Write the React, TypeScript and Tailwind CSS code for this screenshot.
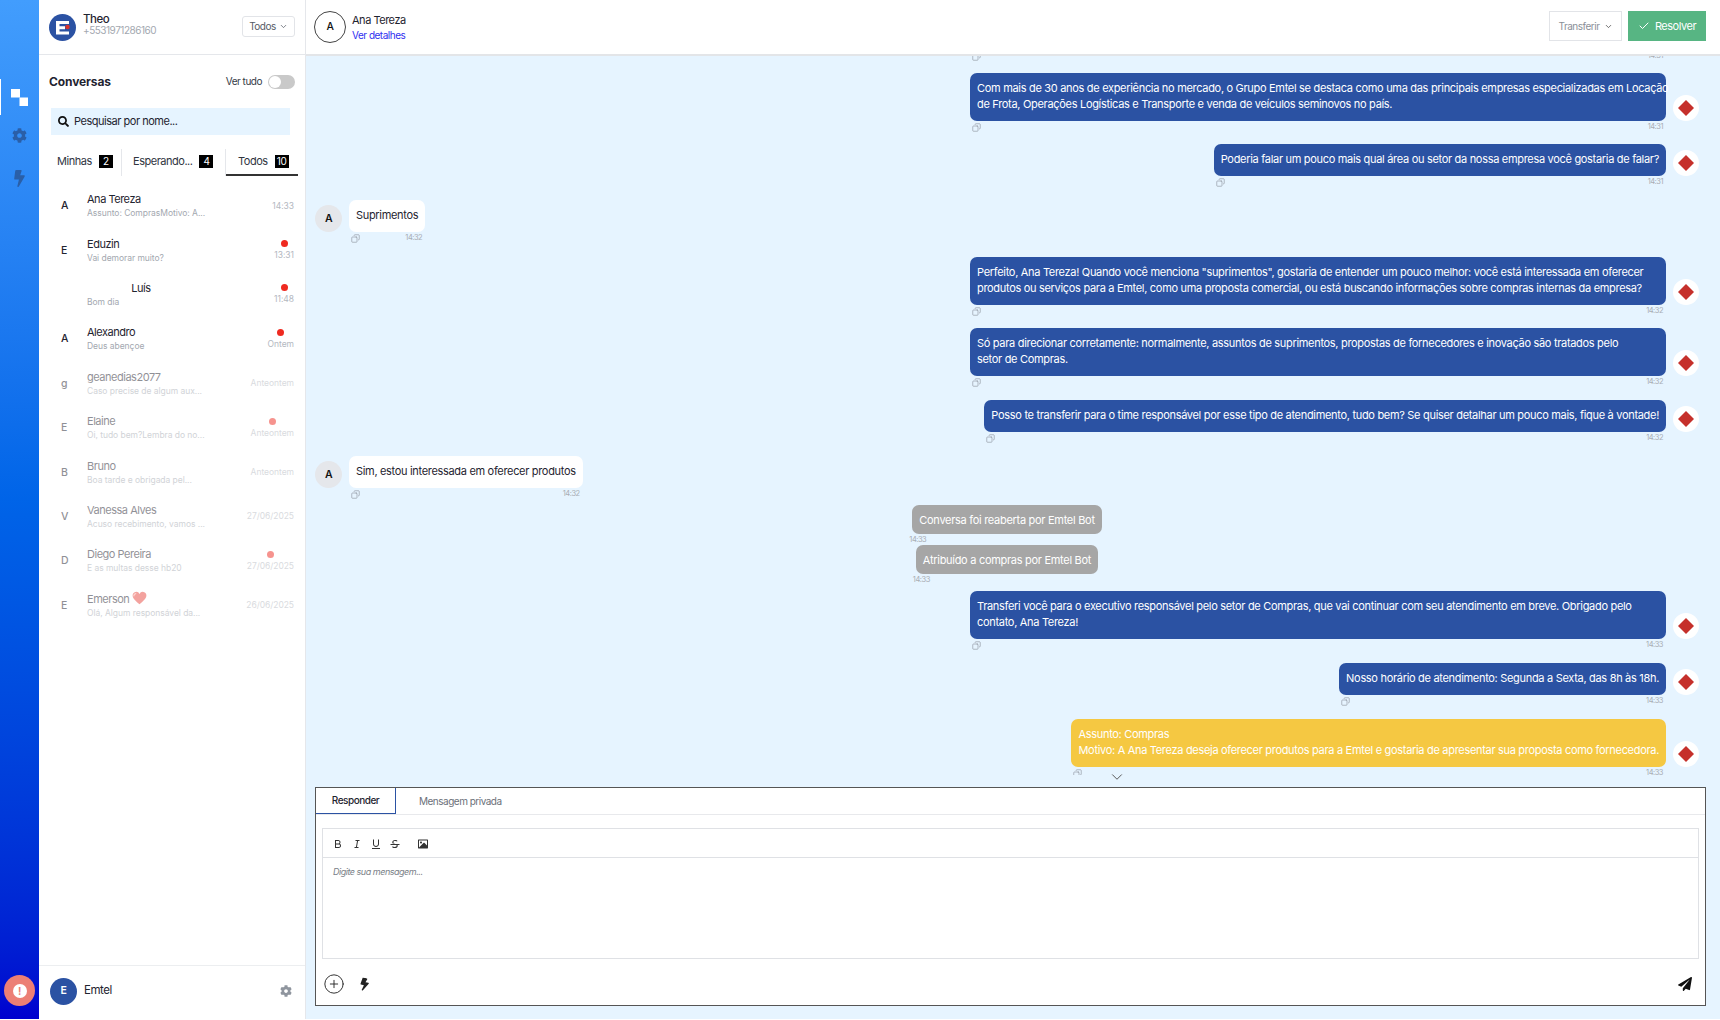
import React from "react";
import { Check, ChevronDown, CirclePlus, Copy } from "lucide-react";
import { FaCog, FaBolt, FaSearch, FaPaperPlane } from "react-icons/fa";
import { RiBold, RiItalic, RiUnderline, RiStrikethrough, RiImageFill } from "react-icons/ri";

type Conv = { l: string; n: React.ReactNode; s: string; t: string; dot?: boolean; center?: boolean };

const Heart = () => (
  <svg width="15" height="14" viewBox="0 0 24 22" className="ml-[3px] inline-block align-[-2px]">
    <path d="M12 21C5 15 1 11.500 1 7a5.800 5.800 0 0 1 11-2.600A5.800 5.800 0 0 1 23 7c0 4.500-4 8-11 14z" fill="#e8483f" />
    <path d="M6 4c-2 .5-3 2-3 3.500" stroke="#ffb0a8" strokeWidth="2" fill="none" strokeLinecap="round" />
  </svg>
);

const convs: Conv[] = [
  { l: "A", n: "Ana Tereza", s: "Assunto: ComprasMotivo: A...", t: "14:33" },
  { l: "E", n: "Eduzin", s: "Vai demorar muito?", t: "13:31", dot: true },
  { l: "", n: "Luís", s: "Bom dia", t: "11:48", dot: true, center: true },
  { l: "A", n: "Alexandro", s: "Deus abençoe", t: "Ontem", dot: true },
  { l: "g", n: "geanedias2077", s: "Caso precise de algum aux...", t: "Anteontem" },
  { l: "E", n: "Elaine", s: "Oi, tudo bem?Lembra do no...", t: "Anteontem", dot: true },
  { l: "B", n: "Bruno", s: "Boa tarde e obrigada pel...", t: "Anteontem" },
  { l: "V", n: "Vanessa Alves", s: "Acuso recebimento, vamos ...", t: "27/06/2025" },
  { l: "D", n: "Diego Pereira", s: "E as multas desse hb20", t: "27/06/2025", dot: true },
  { l: "E", n: <>Emerson<Heart /></>, s: "Olá, Algum responsável da...", t: "26/06/2025" },
];

const Diamond = () => (
  <div className="mb-[12px] flex h-[26px] w-[26px] shrink-0 items-center justify-center rounded-full bg-white">
    <svg width="16" height="16" viewBox="0 0 16 16"><path d="M8 0l8 8-8 8-8-8z" fill="#c5302b" /></svg>
  </div>
);

const Meta = ({ time, className = "" }: { time: string; className?: string }) => (
  <div className={"flex h-[12px] items-center justify-between pl-[2px] pr-[3px] " + className}>
    <Copy size={9} className="-scale-x-100 text-[#8a8f98]" strokeWidth={1.6} />
    <span className="text-[7.5px] leading-none text-[#a9adb4]">{time}</span>
  </div>
);

const Out = ({ children, time, color = "bg-[#2b52a3]", mb = "mb-[12px]", narrow }: { children: React.ReactNode; time: string; color?: string; mb?: string; narrow?: boolean }) => (
  <div className={"flex items-end justify-end gap-[7px] pr-[21px] " + mb}>
    <div className={narrow ? "" : "w-[696px]"}>
      <div className={"whitespace-nowrap rounded-[7px] px-[7px] pb-[9px] pt-[7px] text-[11px] leading-[16px] tracking-[-0.028em] text-white " + color}>{children}</div>
      <Meta time={time} />
    </div>
    <Diamond />
  </div>
);

const In = ({ children, time, mb = "mb-[12px]" }: { children: React.ReactNode; time: string; mb?: string }) => (
  <div className={"flex items-end gap-[7px] pl-[9px] " + mb}>
    <div className="mb-[12px] flex h-[27px] w-[27px] shrink-0 items-center justify-center rounded-full bg-[#e5e7eb] text-[10.5px] font-semibold text-[#111]">A</div>
    <div>
      <div className="rounded-[7px] bg-white px-[7px] pb-[9px] pt-[7px] text-[11px] leading-[16px] tracking-[-0.029em] text-[#1f2430]">{children}</div>
      <Meta time={time} />
    </div>
  </div>
);

const Sys = ({ children, mb }: { children: React.ReactNode; mb: string }) => (
  <div className={"flex flex-col items-center pr-[12px] " + mb}>
    <div className="relative">
      <div className="rounded-[7px] bg-[#a6a6a6] px-[7px] py-[6.500px] text-[11px] leading-[16px] tracking-[-0.0265em] text-white">{children}</div>
      <span className="absolute left-[-3px] top-[31px] text-[7.5px] leading-none text-[#a9adb4]">14:33</span>
    </div>
  </div>
);

export default function App() {
  return (
    <div className="flex h-[1019px] w-full overflow-hidden bg-white tracking-[-0.03em] text-[#1f2430]" style={{ fontFamily: "Inter, 'Noto Sans', sans-serif" }}>
      {/* Rail */}
      <div className="flex w-[39px] shrink-0 flex-col items-center bg-gradient-to-b from-[#429dfd] to-[#0000cf]">
        <div className="relative mt-[79px] flex h-[36px] w-full items-center justify-center">
          <span className="absolute left-0 top-0 h-full w-[1px] bg-white" />
          <svg width="17" height="17" viewBox="0 0 17 17"><rect x="0" y="0" width="9" height="8.500" fill="#fff" /><rect x="8.500" y="8.500" width="8.500" height="8.500" fill="#fff" /></svg>
        </div>
        <FaCog size={15} className="mt-[13px] text-[#2a5fa8]" />
        <FaBolt size={17} className="mt-[27px] text-[#2a5fa8]" />
        <div className="mb-[13px] mt-auto flex h-[31px] w-[31px] items-center justify-center rounded-full bg-[#ec7f75]">
          <div className="flex h-[14px] w-[14px] items-center justify-center rounded-full bg-white text-[10px] font-bold leading-none text-[#ec7f75]">!</div>
        </div>
      </div>

      {/* Sidebar */}
      <div className="flex w-[267px] shrink-0 flex-col border-r border-[#e5e7eb]">
        <div className="flex h-[55px] shrink-0 items-center border-b border-[#e5e7eb] px-[10px]">
          <svg width="27" height="27" viewBox="0 0 27 27" className="shrink-0">
            <circle cx="13.500" cy="13.500" r="13.500" fill="#2b52a3" />
            <path d="M7 7h13v3h-9.500v2.200H16v3h-5.500V17.500H20v3H7z" fill="#fff" />
            <circle cx="18.500" cy="13" r="2.300" fill="#d8342c" />
          </svg>
          <div className="ml-[7px] flex flex-col pb-[6px]">
            <span className="text-[11.5px] font-medium leading-[12px] text-[#1f2430]">Theo</span>
            <span className="text-[10px] leading-[11px] text-[#a3a8b0]">+5531971286160</span>
          </div>
          <div className="mb-[2px] ml-auto flex h-[21px] w-[53px] items-center justify-center gap-[3px] rounded-[3px] border border-[#e2e4e8] text-[10px] text-[#555b66]">
            Todos <ChevronDown size={9} />
          </div>
        </div>

        <div className="flex items-center justify-between px-[10px] pt-[19px]">
          <span className="text-[12px] font-bold leading-[14px] tracking-[-0.01em] text-[#1f2430]">Conversas</span>
          <div className="flex items-center gap-[6px]">
            <span className="text-[10px] text-[#333a46]">Ver tudo</span>
            <div className="flex h-[14px] w-[27px] items-center rounded-full bg-[#c9c9c9] px-[1px]">
              <div className="h-[12px] w-[12px] rounded-full bg-white" />
            </div>
          </div>
        </div>

        <div className="ml-[12px] mt-[19px] flex h-[27px] w-[239px] items-center bg-[#e6f4ff] pl-[7px]">
          <FaSearch size={11} className="text-[#111]" />
          <span className="ml-[5px] text-[11px] text-[#1f2430]">Pesquisar por nome...</span>
        </div>

        <div className="ml-[12px] mt-[14px] flex h-[27px] w-[247px] text-[11px] text-[#30353f]">
          <div className="flex w-[71px] items-center border-r border-[#e5e7eb] pb-[2px] pl-[6px]">
            Minhas<span className="ml-[7px] flex h-[13px] w-[14px] items-center justify-center bg-black text-[10px] text-white">2</span>
          </div>
          <div className="flex w-[104px] items-center border-r border-[#e5e7eb] pb-[2px] pl-[11px]">
            Esperando...<span className="ml-[7px] flex h-[13px] w-[14px] items-center justify-center bg-black text-[10px] text-white">4</span>
          </div>
          <div className="flex w-[72px] items-center border-b-2 border-[#333] pl-[12px]">
            Todos<span className="ml-[7px] flex h-[13px] w-[14px] items-center justify-center bg-black text-[10px] text-white">10</span>
          </div>
        </div>

        <div className="mt-[8px] flex flex-col">
          {convs.map((c, i) => (
            <div key={i} className={"flex h-[44.4px] items-center pr-[11px] " + (i > 3 ? "opacity-50" : "")}>
              <div className="w-[48px] pl-[22px] text-[10.5px] font-medium text-[#1f2430]">{c.l}</div>
              <div className="flex flex-col">
                <span className={"text-[11px] leading-[15px] text-[#1f2430] " + (c.center ? "w-[108px] text-center" : "")}>{c.n}</span>
                <span className="text-[8.5px] leading-[13px] tracking-[-0.005em] text-[#a3a8b0]">{c.s}</span>
              </div>
              <div className="ml-auto flex flex-col items-center">
                {c.dot && <span className="mb-[3px] h-[7px] w-[7px] rounded-full bg-[#ef2a20]" />}
                <span className="text-[8.5px] leading-[11px] tracking-[-0.005em] text-[#b4b8bf]">{c.t}</span>
              </div>
            </div>
          ))}
        </div>

        <div className="mt-auto flex h-[54px] shrink-0 items-center border-t border-[#eceef0] pb-[3px] pl-[11px] pr-[13px]">
          <div className="flex h-[27px] w-[27px] items-center justify-center rounded-full bg-[#2b52a3] text-[10.5px] font-semibold text-white">E</div>
          <span className="ml-[7px] text-[11.5px] text-[#1f2430]">Emtel</span>
          <FaCog size={12} className="ml-auto text-[#8f959e]" />
        </div>
      </div>

      {/* Main */}
      <div className="relative flex min-w-0 flex-1 flex-col bg-[#e6f4ff]">
        <div className="flex h-[56px] shrink-0 items-center border-b-2 border-[#e3e5e8] bg-white pl-[8px] pr-[14px]">
          <div className="flex h-[32px] w-[32px] items-center justify-center rounded-full border border-[#444] text-[10.5px] font-medium text-[#111]">A</div>
          <div className="ml-[6px] flex flex-col pt-[2px]">
            <span className="text-[11px] leading-[15px] text-[#1f2430]">Ana Tereza</span>
            <span className="text-[10px] leading-[15px] text-[#2f2ff0]">Ver detalhes</span>
          </div>
          <div className="mb-[2px] ml-auto flex h-[30px] w-[73px] items-center justify-center gap-[4px] border border-[#e2e4e8] text-[10px] text-[#8a8f98]">
            Transferir <ChevronDown size={9} className="text-[#444]" />
          </div>
          <div className="mb-[2px] ml-[6px] flex h-[30px] w-[78px] items-center justify-center gap-[5px] bg-[#57b583] text-[11px] text-white">
            <Check size={12} /> Resolver
          </div>
        </div>

        <div className="min-h-0 flex-1 overflow-hidden">
          <div className="mb-[11px] flex justify-end pr-[54px]">
            <div className="h-[6px] w-[696px] overflow-hidden"><Meta time="14:31" className="-mt-[6px]" /></div>
          </div>
          <Out time="14:31" mb="mb-[11px]">Com mais de 30 anos de experiência no mercado, o Grupo Emtel se destaca como uma das principais empresas especializadas em Locação<br />de Frota, Operações Logísticas e Transporte e venda de veículos seminovos no país.</Out>
          <Out time="14:31" narrow>Poderia falar um pouco mais qual área ou setor da nossa empresa você gostaria de falar?</Out>
          <In time="14:32" mb="mb-[13px]">Suprimentos</In>
          <Out time="14:32" mb="mb-[11px]">Perfeito, Ana Tereza! Quando você menciona "suprimentos", gostaria de entender um pouco melhor: você está interessada em oferecer<br />produtos ou serviços para a Emtel, como uma proposta comercial, ou está buscando informações sobre compras internas da empresa?</Out>
          <Out time="14:32">Só para direcionar corretamente: normalmente, assuntos de suprimentos, propostas de fornecedores e inovação são tratados pelo<br />setor de Compras.</Out>
          <Out time="14:32" narrow>Posso te transferir para o time responsável por esse tipo de atendimento, tudo bem? Se quiser detalhar um pouco mais, fique à vontade!</Out>
          <In time="14:32" mb="mb-[5px]">Sim, estou interessada em oferecer produtos</In>
          <Sys mb="mb-[11px]">Conversa foi reaberta por Emtel Bot</Sys>
          <Sys mb="mb-[17px]">Atribuído a compras por Emtel Bot</Sys>
          <Out time="14:33">Transferi você para o executivo responsável pelo setor de Compras, que vai continuar com seu atendimento em breve. Obrigado pelo<br />contato, Ana Tereza!</Out>
          <Out time="14:33" narrow>Nosso horário de atendimento: Segunda a Sexta, das 8h às 18h.</Out>
          <Out time="14:33" narrow color="bg-[#f5c842]">Assunto: Compras<br />Motivo: A Ana Tereza deseja oferecer produtos para a Emtel e gostaria de apresentar sua proposta como fornecedora.</Out>
        </div>

        <ChevronDown size={18} strokeWidth={1.3} className="absolute left-[802px] top-[768px] text-[#555]" />

        <div className="mb-[13px] ml-[9px] mr-[14px] mt-[12px] flex h-[219px] shrink-0 flex-col border border-[#555] bg-white">
          <div className="flex h-[27px] shrink-0 border-b border-[#e8e9ec] text-[10px]">
            <div className="flex w-[80px] items-center justify-center border-b border-r border-[#2b52a3] font-medium text-[#1f2430]">Responder</div>
            <div className="ml-[23px] flex items-center tracking-[-0.05em] text-[#6b7079]">Mensagem privada</div>
          </div>
          <div className="mx-[6px] mt-[13px] flex h-[131px] flex-col border border-[#dfe1e5]">
            <div className="flex h-[29px] shrink-0 items-center border-b border-[#dfe1e5] pl-[9px] pt-[1px] text-[#333]">
              <RiBold size={12} />
              <RiItalic size={12} className="ml-[7px]" />
              <RiUnderline size={12} className="ml-[7px]" />
              <RiStrikethrough size={12} className="ml-[7px]" />
              <RiImageFill size={12} className="ml-[16px]" />
            </div>
            <div className="pl-[10px] pt-[8px] text-[9px] italic leading-[12px] text-[#7a7f88]">Digite sua mensagem...</div>
          </div>
          <div className="flex flex-1 items-center pl-[7px] pr-[13px] pt-[4px]">
            <CirclePlus size={22} strokeWidth={1} className="text-[#222]" />
            <FaBolt size={13} className="ml-[13px] rotate-12 text-[#222]" />
            <FaPaperPlane size={14} className="ml-auto text-[#111]" />
          </div>
        </div>
      </div>
    </div>
  );
}
